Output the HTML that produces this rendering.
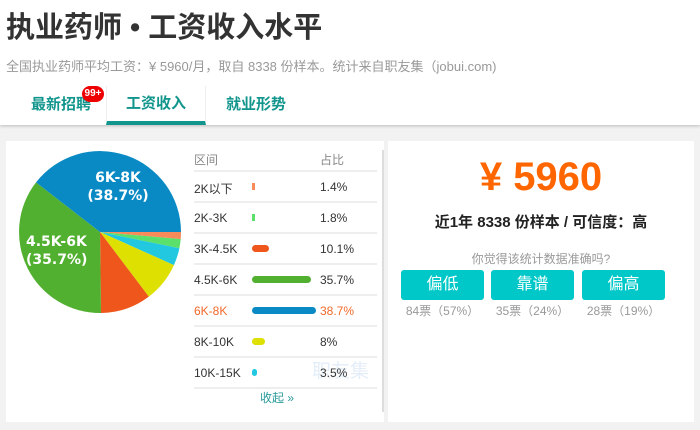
<!DOCTYPE html>
<html><head><meta charset="utf-8"><style>
*{margin:0;padding:0;box-sizing:border-box}
body{width:700px;height:430px;overflow:hidden;background:#f2f2f2;font-family:"Liberation Sans","Noto Sans CJK SC",sans-serif;position:relative}
.top{position:absolute;left:0;top:0;width:700px;height:125px;background:#fff;box-shadow:0 1px 3px #bbb}
.a{position:absolute;white-space:nowrap}
.tab{position:absolute;top:86px;height:39px;line-height:38px;font-size:15px;font-weight:bold;color:#12958c;text-align:center}
.panel{position:absolute;background:#fff}
.row{position:absolute;left:194px;width:183px;height:31px;border-bottom:2px solid #eee;font-size:12px;color:#333}
.row span{position:absolute;top:8px}
.bar{position:absolute;left:58px;top:11px;height:7px;border-radius:4px}
.btn{position:absolute;top:270px;width:83px;height:30px;background:#00c8c8;border-radius:3px;color:#fff;font-size:16px;text-align:center;line-height:30px}
.v{position:absolute;top:302px;width:83px;text-align:center;font-size:12px;color:#999}
</style></head><body>
<div class="top">
<div class="a" style="left:6px;top:4px;font-size:29px;font-weight:bold;color:#333">执业药师 • 工资收入水平</div>
<div class="a" style="left:6px;top:56px;font-size:13px;color:#999">全国执业药师平均工资：¥ 5960/月，取自 8338 份样本。统计来自职友集（jobui.com)</div>
<div class="tab" style="left:18px;width:86px">最新招聘</div>
<div class="a" style="left:82px;top:86px;width:22px;height:16px;border-radius:8px;background:#e00;color:#fff;font-size:10px;font-weight:bold;text-align:center;line-height:16px">99+</div>
<div class="tab" style="left:106px;width:100px;border-left:1px solid #eee;border-right:1px solid #eee;border-bottom:4px solid #12958c;line-height:36px">工资收入</div>
<div class="tab" style="left:206px;width:100px">就业形势</div>
</div>
<div class="panel" style="left:6px;top:141px;width:378px;height:281px"></div>
<div class="panel" style="left:388px;top:141px;width:306px;height:281px"></div>
<div class="a" style="left:382px;top:150px;width:2px;height:262px;background:#ddd"></div>
<svg class="a" style="left:0;top:0" width="200" height="330">
<path d="M100 232L181 232A81 81 0 0 1 180.7 239.1Z" fill="#f98a5a"/>
<path d="M100 232L180.7 239.1A81 81 0 0 1 179.4 248.2Z" fill="#5ce06c"/>
<path d="M100 232L179.4 248.2A81 81 0 0 1 173.9 265.1Z" fill="#22c8e0"/>
<path d="M100 232L173.9 265.1A81 81 0 0 1 148.8 296.6Z" fill="#dde000"/>
<path d="M100 232L148.8 296.6A81 81 0 0 1 101 313Z" fill="#ee561c"/>
<path d="M100 232L101 313A81 81 0 0 1 36 182.4Z" fill="#52b030"/>
<path d="M100 232L36 182.4A81 81 0 0 1 181 232Z" fill="#0a8ac4"/>
<g fill="#fff" font-weight="bold" font-size="14" font-family="DejaVu Sans,sans-serif">
<text x="118" y="182" text-anchor="middle">6K-8K</text><text x="118" y="200" text-anchor="middle">(38.7%)</text>
<text x="26" y="246">4.5K-6K</text><text x="26" y="264">(35.7%)</text></g>
</svg>
<div class="a" style="left:194px;top:151px;font-size:12px;color:#888">区间</div>
<div class="a" style="left:320px;top:151px;font-size:12px;color:#888">占比</div>
<div class="a" style="left:194px;top:170px;width:183px;height:2px;background:#eee"></div>
<div class="row" style="top:172px"><span>2K以下</span><div class="bar" style="width:3px;background:#f98a5a;border-radius:0"></div><span style="left:126px">1.4%</span></div>
<div class="row" style="top:203px"><span>2K-3K</span><div class="bar" style="width:3px;background:#5ce06c;border-radius:0"></div><span style="left:126px">1.8%</span></div>
<div class="row" style="top:234px"><span>3K-4.5K</span><div class="bar" style="width:17px;background:#ee561c"></div><span style="left:126px">10.1%</span></div>
<div class="row" style="top:265px"><span>4.5K-6K</span><div class="bar" style="width:59px;background:#52b030"></div><span style="left:126px">35.7%</span></div>
<div class="row" style="top:296px;color:#f06a2a"><span>6K-8K</span><div class="bar" style="width:64px;background:#0a8ac4"></div><span style="left:126px">38.7%</span></div>
<div class="row" style="top:327px"><span>8K-10K</span><div class="bar" style="width:13px;background:#dde000"></div><span style="left:126px">8%</span></div>
<div class="a" style="left:312px;top:356px;font-size:19px;color:#e4eef8">职友集</div>
<div class="row" style="top:358px"><span>10K-15K</span><div class="bar" style="width:5px;background:#22c8e0"></div><span style="left:126px">3.5%</span></div>
<div class="a" style="left:260px;top:389px;font-size:12px;color:#2a9a9a">收起 »</div>
<div class="a" style="left:388px;width:306px;top:155px;text-align:center;font-size:40px;font-weight:bold;color:#ff6600">¥ 5960</div>
<div class="a" style="left:388px;width:306px;top:211px;text-align:center;font-size:15px;font-weight:bold;color:#222">近1年 8338 份样本 / 可信度：高</div>
<div class="a" style="left:388px;width:306px;top:250px;text-align:center;font-size:12px;color:#999">你觉得该统计数据准确吗?</div>
<div class="btn" style="left:401px">偏低</div><div class="btn" style="left:491px">靠谱</div><div class="btn" style="left:582px">偏高</div>
<div class="v" style="left:401px">84票（57%）</div><div class="v" style="left:491px">35票（24%）</div><div class="v" style="left:582px">28票（19%）</div>
</body></html>
